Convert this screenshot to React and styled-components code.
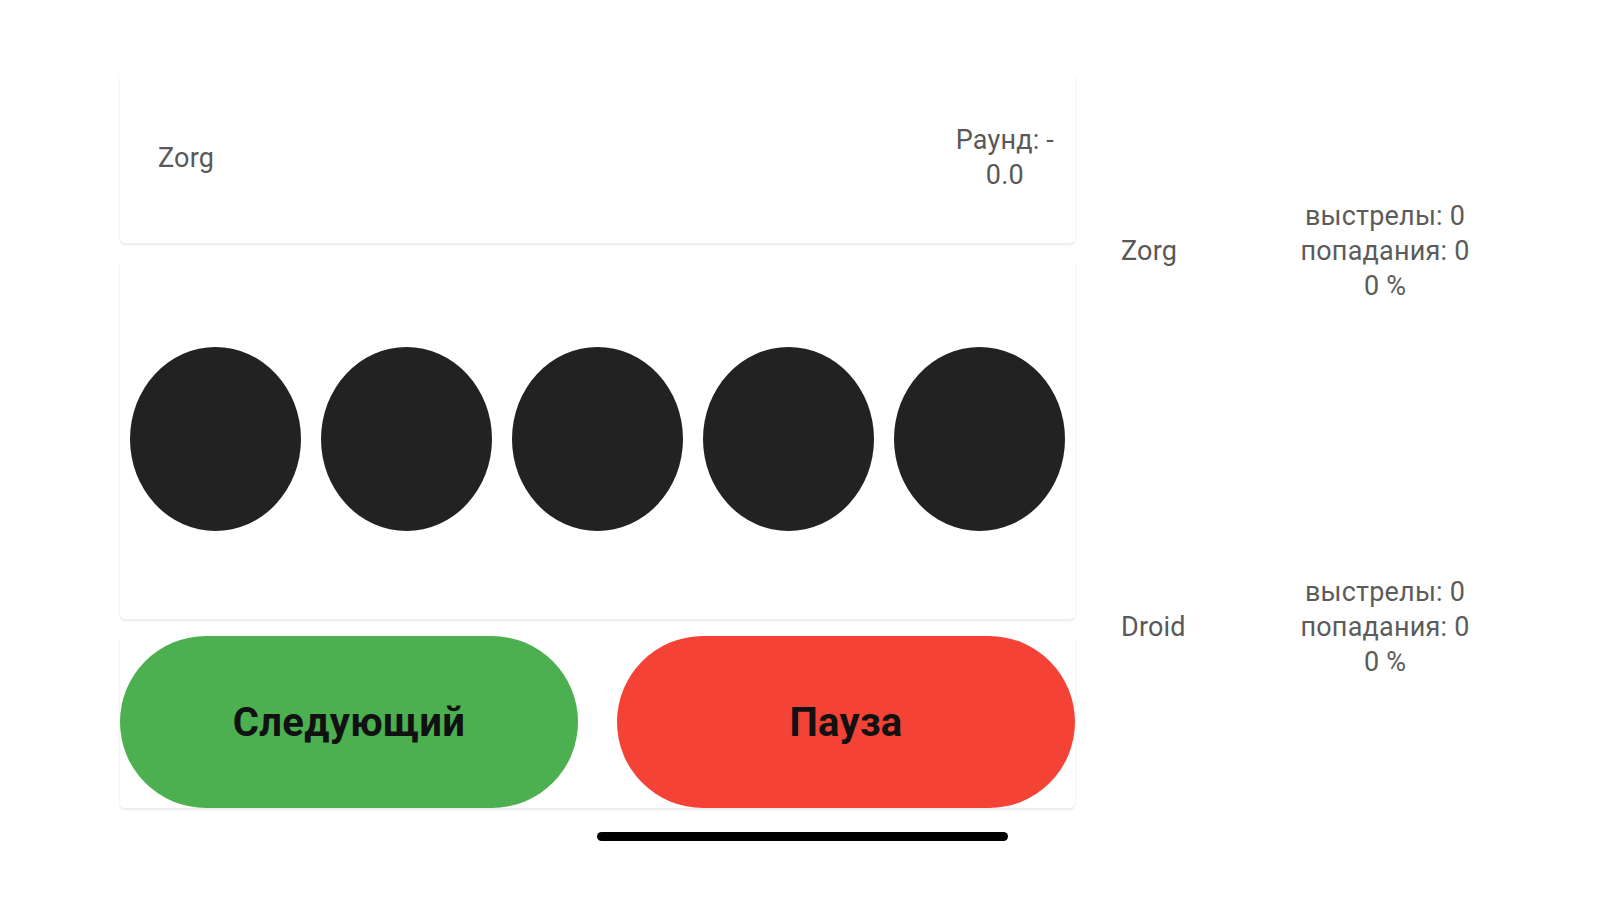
import React from 'react';
import styled, { createGlobalStyle } from 'styled-components';

const GlobalStyle = createGlobalStyle`
  html, body {
    margin: 0;
    padding: 0;
    background: #ffffff;
  }
  body {
    font-family: Roboto, "Noto Sans", "Liberation Sans", sans-serif;
  }
`;

const Screen = styled.div`
  width: 1599px;
  height: 900px;
  display: flex;
  flex-direction: column;
  background: #ffffff;
  overflow: hidden;
`;

const Main = styled.div`
  display: flex;
  padding: 63px 0 0 120px;
`;

const GameColumn = styled.div`
  width: 955px;
  padding-top: 10px;
  display: flex;
  flex-direction: column;
`;

const Card = styled.div`
  background: #ffffff;
  border-radius: 5px;
  box-shadow: 0 2px 3px rgba(0, 0, 0, 0.09), 0 0 1px rgba(0, 0, 0, 0.05);
  margin-bottom: ${(p) => p.$gap || 0}px;
`;

const Header = styled(Card)`
  height: 170px;
  display: flex;
  align-items: center;
  justify-content: space-between;
  padding: 0 21px 0 38px;
  box-sizing: border-box;
`;

const Label = styled.div`
  font-size: 27px;
  line-height: 35px;
  color: #595959;
  letter-spacing: 0.2px;
  text-align: ${(p) => p.$align || 'left'};
`;

const Board = styled(Card)`
  height: 359px;
  display: flex;
  align-items: center;
  justify-content: space-between;
  padding: 0 10px;
  box-sizing: border-box;
`;

const Target = styled.div`
  width: 171px;
  height: 184px;
  border-radius: 50%;
  background: #222222;
  margin-top: -1px;
`;

const Controls = styled(Card)`
  height: 174px;
  display: flex;
  align-items: flex-end;
  justify-content: space-between;
`;

const PillButton = styled.button`
  width: 458px;
  height: 172px;
  border: none;
  border-radius: 86px;
  background: ${(p) => p.$color};
  color: #111111;
  font-family: Roboto, "Liberation Sans", sans-serif;
  font-weight: 700;
  font-size: 40px;
  letter-spacing: 0.3px;
  cursor: pointer;
`;

const Stats = styled.div`
  margin-left: 46px;
  display: flex;
  flex-direction: column;
`;

const StatRow = styled.div`
  height: 376px;
  display: flex;
  align-items: center;
`;

const PlayerName = styled(Label)`
  width: 164px;
`;

const StatBlock = styled(Label)`
  width: 200px;
  color: #5c5c5c;
`;

const HomeBar = styled.div`
  align-self: center;
  margin: 17px 0 0 6px;
  width: 411px;
  height: 9px;
  border-radius: 5px;
  background: #000000;
`;

const players = [
  { name: 'Zorg', shots: 0, hits: 0 },
  { name: 'Droid', shots: 0, hits: 0 },
];

export default function App() {
  return (
    <>
      <GlobalStyle />
      <Screen>
        <Main>
          <GameColumn>
            <Header $gap={17}>
              <Label>Zorg</Label>
              <Label $align="center">
                Раунд: -
                <br />
                0.0
              </Label>
            </Header>
            <Board $gap={15}>
              {[0, 1, 2, 3, 4].map((i) => (
                <Target key={i} />
              ))}
            </Board>
            <Controls>
              <PillButton $color="#4caf50">Следующий</PillButton>
              <PillButton $color="#f44336">Пауза</PillButton>
            </Controls>
          </GameColumn>
          <Stats>
            {players.map((p) => (
              <StatRow key={p.name}>
                <PlayerName>{p.name}</PlayerName>
                <StatBlock $align="center">
                  выстрелы: {p.shots}
                  <br />
                  попадания: {p.hits}
                  <br />
                  {p.shots ? Math.round((p.hits / p.shots) * 100) : 0} %
                </StatBlock>
              </StatRow>
            ))}
          </Stats>
        </Main>
        <HomeBar />
      </Screen>
    </>
  );
}
